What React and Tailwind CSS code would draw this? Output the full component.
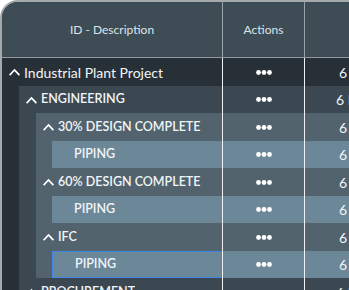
const LEVEL_BG = ['bg-[#273037]', 'bg-[#3b4852]', 'bg-[#52636e]', 'bg-[#6c8798]'];
const INDENT = ['w-[17px]', 'w-[17px]', 'w-[16px]'];

const rows = [
  { label: 'Industrial Plant Project', level: 0, caps: false, open: true, value: '6' },
  { label: 'ENGINEERING', level: 1, caps: true, open: true, value: '6 N' },
  { label: '30% DESIGN COMPLETE', level: 2, caps: true, open: true, value: '6' },
  { label: 'PIPING', level: 3, caps: true, value: '6' },
  { label: '60% DESIGN COMPLETE', level: 2, caps: true, open: true, value: '6' },
  { label: 'PIPING', level: 3, caps: true, value: '6' },
  { label: 'IFC', level: 2, caps: true, open: true, value: '6' },
  { label: 'PIPING', level: 3, caps: true, value: '6', selected: true },
  { label: 'PROCUREMENT', level: 1, caps: true, open: true, value: '6 N' },
];

function Chevron() {
  return (
    <svg width="11" height="8" viewBox="0 0 11 8" className="shrink-0">
      <polyline points="1.2,6.5 5.5,2 9.8,6.5" fill="none" stroke="#ffffff" strokeWidth="1.7" strokeLinecap="square" />
    </svg>
  );
}

function Dots() {
  return (
    <svg width="16" height="5" viewBox="0 0 16 5">
      <circle cx="2.5" cy="2.5" r="2.4" fill="#ffffff" />
      <circle cx="8" cy="2.5" r="2.4" fill="#ffffff" />
      <circle cx="13.5" cy="2.5" r="2.4" fill="#ffffff" />
    </svg>
  );
}

function Row({ row, tall }) {
  const bg = LEVEL_BG[row.level];
  return (
    <div className={`flex text-[#f1f5f8] ${tall ? 'h-[28px]' : 'h-[27px]'}`}>
      <div className="flex w-[220px] shrink-0">
        {INDENT.slice(0, row.level).map((w, i) => (
          <div key={i} className={`${w} shrink-0 ${LEVEL_BG[i]}`} />
        ))}
        <div className={`flex min-w-0 flex-1 flex-col ${bg}`}>
          {row.selected && <div className="h-px shrink-0 bg-[#3f86e6]" />}
          <div className={`flex min-h-0 flex-1 items-center ${row.selected ? 'border-x border-[#3f86e6]' : ''}`}>
            <div className={`flex w-[22px] shrink-0 justify-center ${row.selected ? 'pl-[2px]' : 'pl-[3px]'}`}>
              {row.open && <Chevron />}
            </div>
            <span className={`truncate whitespace-nowrap ${row.caps ? 'text-[12.5px] font-semibold' : 'text-[14px]'}`}>
              {row.label}
            </span>
          </div>
          {row.selected && <div className="h-px shrink-0 bg-[#3f86e6]" />}
        </div>
      </div>
      <div className="w-px shrink-0 bg-[#eef1f3]" />
      <div className={`flex w-[81px] shrink-0 items-center justify-center ${bg}`}>
        <Dots />
      </div>
      <div className="w-px shrink-0 bg-[#eef1f3]" />
      <div className={`flex flex-1 items-center ${bg} ${row.value === '6' ? 'pl-[34px]' : 'pl-[31px]'}`}>
        <span className="whitespace-nowrap text-[14px]">{row.value}</span>
      </div>
    </div>
  );
}

export default function App() {
  return (
    <div className="h-[290px] w-[349px] overflow-hidden bg-white" style={{ fontFamily: 'Lato, "Noto Sans", sans-serif' }}>
      <div className="w-[420px] overflow-hidden rounded-tl-[18px] border-l-2 border-t-2 border-[#a4a9ac] bg-[#273037]">
        <div className="flex h-[56px] border-b border-[#8f999f] bg-[#3e4c56] text-[12px] text-[#dfe4e7]">
          <div className="flex w-[220px] shrink-0 items-center justify-center">ID - Description</div>
          <div className="w-px shrink-0 bg-[#9aa3a8]" />
          <div className="flex w-[81px] shrink-0 items-center justify-center">Actions</div>
          <div className="w-px shrink-0 bg-[#9aa3a8]" />
          <div className="flex-1" />
        </div>
        {rows.map((row, i) => (
          <Row key={i} row={row} tall={i % 2 === 0} />
        ))}
      </div>
    </div>
  );
}
